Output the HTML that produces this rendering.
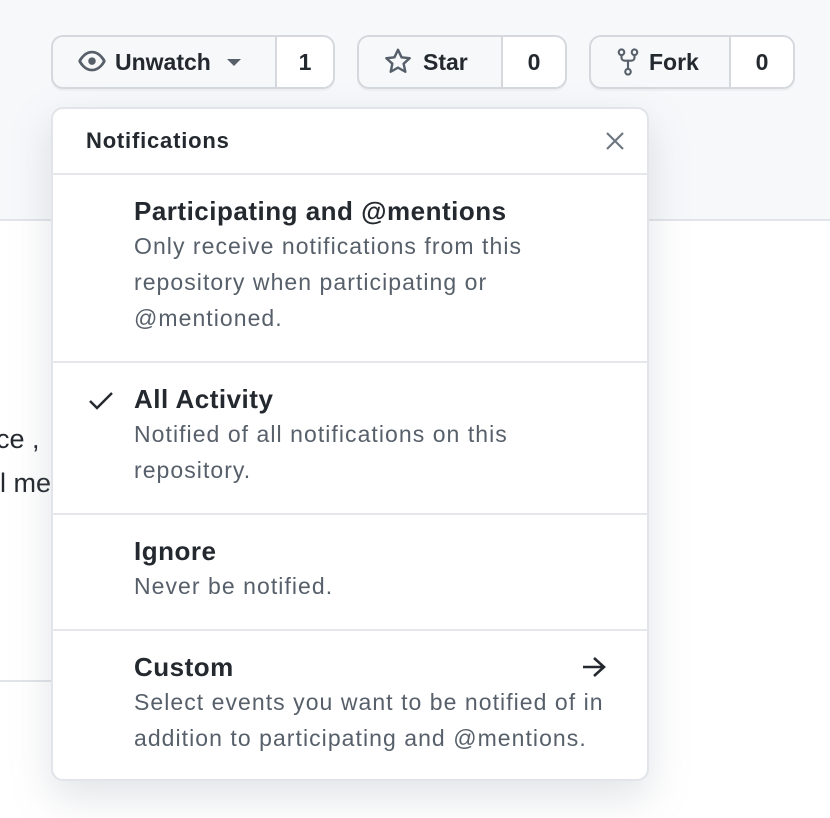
<!DOCTYPE html>
<html><head><meta charset="utf-8"><style>
*{box-sizing:border-box;margin:0;padding:0}
body{width:830px;height:818px;overflow:hidden;background:#fff;font-family:"Liberation Sans",sans-serif;color:#24292f;position:relative}
.top{position:absolute;left:0;top:0;width:830px;height:221px;background:#f6f8fa;border-bottom:2px solid #e1e4e8}
.line2{position:absolute;left:0;top:680px;width:60px;height:2px;background:#e1e4e8}
.bg{position:absolute;font-size:27px;color:#24292f}
.btn{position:absolute;top:35px;height:54px;border:2px solid #d5d8dc;border-radius:12px;background:#f6f8fa;display:flex;box-shadow:0 2px 0 rgba(27,31,35,.04);font-size:23px;font-weight:bold}
.btn .l{display:flex;align-items:center;padding-left:24px}
.btn .c{background:#fff;border-left:2px solid #d5d8dc;display:flex;align-items:center;justify-content:center;border-radius:0 10px 10px 0}
.dd{position:absolute;left:51px;top:107px;width:598px;height:674px;background:#fff;border:2px solid #e1e4e8;border-radius:12px;box-shadow:0 16px 40px rgba(140,149,159,.25)}
.hd{height:66px;border-bottom:2px solid #e5e7ea;font-size:22px;letter-spacing:.8px;font-weight:bold;padding:19px 0 0 33px;position:relative}
.it{border-bottom:2px solid #e5e7ea;padding-left:81px;position:relative}
.it h{display:block;font-size:26px;letter-spacing:.5px;font-weight:bold;line-height:30px}
.it p{font-size:23px;letter-spacing:1.05px;line-height:36px;color:#57606a;white-space:nowrap}
</style></head><body>
<div class="top"></div>
<div class="bg" style="top:424px;left:-4px">ce ,</div>
<div class="bg" style="top:468px;left:0px">l me</div>
<div class="line2"></div>

<div class="btn" style="left:51px;width:284px">
 <div class="l" style="width:222px">
  <svg width="30" height="30" viewBox="0 0 16 16" fill="#57606a"><path d="M8 2c1.98 0 3.6.9 4.8 2 1.2 1.1 2 2.3 2.4 3.1.1.3.1.5 0 .8-.4.8-1.2 2-2.4 3.1C11.6 12.1 9.980 13 8 13s-3.6-.9-4.8-2C2 9.9 1.2 8.7.8 7.9a.9.9 0 010-.8C1.2 6.3 2 5.1 3.2 4 4.4 2.9 6 2 8 2zM2.3 7.5c.4.7 1.1 1.7 2 2.6C5.4 11 6.6 11.6 8 11.6s2.6-.6 3.7-1.5c1-.9 1.6-1.9 2-2.6-.4-.7-1-1.700-2-2.6C10.6 4 9.4 3.4 8 3.4S5.4 4 4.3 4.9c-1 .9-1.6 1.9-2 2.6zM8 9.5a2 2 0 110-4 2 2 0 010 4z"/></svg>
  <span style="margin-left:8px">Unwatch</span>
  <svg width="18" height="10" viewBox="0 0 18 10" style="margin-left:14px"><path d="M2 2h14l-7 7z" fill="#57606a"/></svg>
 </div>
 <div class="c" style="flex:1">1</div>
</div>

<div class="btn" style="left:357px;width:210px">
 <div class="l" style="width:142px">
  <svg width="30" height="30" viewBox="0 0 16 16" fill="none" stroke="#57606a" stroke-width="1.3" stroke-linejoin="round"><path d="M8 1.5l1.9 4 4.3.5-3.2 2.9.9 4.3L8 11l-3.9 2.2.9-4.3L1.8 6l4.3-.5z"/></svg>
  <span style="margin-left:10px">Star</span>
 </div>
 <div class="c" style="flex:1">0</div>
</div>

<div class="btn" style="left:589px;width:206px">
 <div class="l" style="width:138px">
  <svg width="26" height="30" viewBox="0 0 16 18" fill="none" stroke="#57606a" stroke-width="1.3"><circle cx="4" cy="3" r="1.7"/><circle cx="12" cy="3" r="1.7"/><circle cx="8" cy="15" r="1.7"/><path d="M4 4.7v1.5c0 1.2.8 2 2 2h4c1.2 0 2-.8 2-2V4.7M8 8.2v5.1"/></svg>
  <span style="margin-left:8px">Fork</span>
 </div>
 <div class="c" style="flex:1">0</div>
</div>

<div class="dd">
 <div class="hd">Notifications
  <svg style="position:absolute;right:22px;top:22px" width="20" height="20" viewBox="0 0 20 20" stroke="#6e7781" stroke-width="2.2"><path d="M2 2l16 16M18 2L2 18"/></svg>
 </div>
 <div class="it" style="height:188px;padding-top:21px"><h>Participating and @mentions</h><p style="margin-top:2px">Only receive notifications from this<br>repository when participating or<br>@mentioned.</p></div>
 <div class="it" style="height:152px;padding-top:21px">
  <svg style="position:absolute;left:35px;top:28px" width="26" height="20" viewBox="0 0 26 20" fill="none" stroke="#24292f" stroke-width="2.4"><path d="M2 10l7 7L24 2"/></svg>
  <h>All Activity</h><p style="margin-top:2px">Notified of all notifications on this<br>repository.</p></div>
 <div class="it" style="height:116px;padding-top:21px"><h>Ignore</h><p style="margin-top:2px">Never be notified.</p></div>
 <div class="it" style="border:0;padding-top:21px"><h>Custom</h>
  <svg style="position:absolute;right:40px;top:25px" width="26" height="22" viewBox="0 0 26 22" fill="none" stroke="#24292f" stroke-width="2.6"><path d="M2 11h21M13 2l10 9-10 9"/></svg>
  <p style="margin-top:2px">Select events you want to be notified of in<br>addition to participating and @mentions.</p></div>
</div>
</body></html>
